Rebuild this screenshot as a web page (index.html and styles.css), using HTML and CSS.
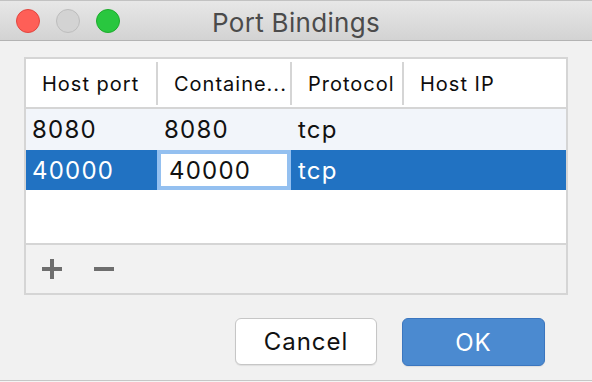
FILE: index.html
```html
<!DOCTYPE html>
<html lang="en">
  <head>
    <meta charset="UTF-8" />
    <title>Port Bindings</title>
    <link rel="stylesheet" href="styles.css">
  </head>
  <body>
    <div class="window">
      <header class="titlebar">
        <div class="lights">
          <span class="light light-close"></span>
          <span class="light light-min"></span>
          <span class="light light-max"></span>
        </div>
        <h1 class="title">Port Bindings</h1>
        <div></div>
      </header>

      <main class="content">
        <section class="table-panel">
          <div class="table-head">
            <div class="head-cell">Host port</div>
            <div class="head-cell">Containe...</div>
            <div class="head-cell">Protocol</div>
            <div class="head-cell head-last">Host IP</div>
          </div>
          <div class="table-row">
            <div class="cell">8080</div>
            <div class="cell">8080</div>
            <div class="cell">tcp</div>
            <div class="cell"></div>
          </div>
          <div class="table-row row-selected">
            <div class="cell">40000</div>
            <div class="cell cell-edit"><span class="editor">40000</span></div>
            <div class="cell">tcp</div>
            <div class="cell"></div>
          </div>
          <div class="table-empty"></div>
          <div class="table-toolbar">
            <button class="tool-btn" title="Add">
              <svg width="20" height="20" viewBox="0 0 20 20"><rect x="0" y="8" width="20" height="4" /><rect x="8" y="0" width="4" height="20" /></svg>
            </button>
            <button class="tool-btn" title="Remove">
              <svg width="20" height="20" viewBox="0 0 20 20"><rect x="0" y="8" width="20" height="4" /></svg>
            </button>
          </div>
        </section>

        <div class="actions">
          <button class="btn">Cancel</button>
          <button class="btn btn-primary">OK</button>
        </div>
      </main>
    </div>
  </body>
</html>
```

FILE: styles.css
```css
* {
  box-sizing: border-box;
}

body {
  margin: 0;
  background: #f4f4f4;
  font-family: Inter, "Liberation Sans", sans-serif;
  color: #111;
}

.window {
  width: 592px;
  height: 381px;
  display: flex;
  flex-direction: column;
  background: #f1f1f1;
  border-top: 1px solid #c2c2c2;
  border-bottom: 1px solid #c6c6c6;
}

/* title bar */
.titlebar {
  height: 40px;
  display: grid;
  grid-template-columns: 1fr auto 1fr;
  align-items: center;
  background: linear-gradient(#e7e7e7, #d3d3d3);
  border-bottom: 1px solid #b3b3b3;
}

.lights {
  display: flex;
  gap: 16px;
  padding-left: 16px;
}

.light {
  width: 24px;
  height: 24px;
  border-radius: 50%;
  border: 1px solid;
}

.light-close {
  background: #fe5f57;
  border-color: #e2463f;
}

.light-min {
  background: #d3d3d3;
  border-color: #bdbdbd;
}

.light-max {
  background: #29c73f;
  border-color: #1dac2c;
}

.title {
  margin: 0;
  padding-top: 3px;
  font-size: 26px;
  font-weight: 400;
  color: #4b4b4b;
  letter-spacing: 0.3px;
}

/* content */
.content {
  flex: 1;
  padding: 16px 24px 0 24px;
}

.table-panel {
  height: 238px;
  display: flex;
  flex-direction: column;
  background: #fff;
  border: 2px solid #d5d5d5;
}

.table-head,
.table-row {
  display: grid;
  grid-template-columns: 132px 134px 112px 1fr;
}

.table-head {
  height: 50px;
  padding: 3px 0 2px;
  border-bottom: 2px solid #d5d5d5;
}

.head-cell {
  display: flex;
  align-items: center;
  padding-left: 16px;
  font-size: 20px;
  letter-spacing: 1px;
  color: #0d0d0d;
  border-right: 2px solid #d5d5d5;
  white-space: nowrap;
}

.head-cell.head-last {
  border-right: none;
}

.table-row {
  height: 41px;
  background: #f2f5fa;
}

.table-row.row-selected {
  height: 40px;
  background: #2172c2;
  color: #fff;
}

.cell {
  display: flex;
  align-items: center;
  padding-left: 6px;
  font-size: 24px;
  letter-spacing: 1.2px;
}

.cell-edit {
  padding: 0;
}

.editor {
  width: 100%;
  height: 100%;
  display: flex;
  align-items: center;
  padding-left: 8px;
  background: #fff;
  color: #111;
  border: 4px solid #94c0f0;
  margin-left: -1px;
}

.table-empty {
  flex: 1;
}

.table-toolbar {
  height: 50px;
  display: flex;
  align-items: center;
  gap: 32px;
  padding-left: 16px;
  background: #f2f2f2;
  border-top: 2px solid #d5d5d5;
}

.tool-btn {
  padding: 0;
  border: none;
  background: none;
  display: flex;
  fill: #6e6e6e;
}

/* dialog buttons */
.actions {
  display: flex;
  justify-content: flex-end;
  gap: 25px;
  margin-top: 23px;
  padding-right: 23px;
}

.btn {
  width: 142px;
  height: 47px;
  font-family: Inter, "Liberation Sans", sans-serif;
  font-size: 24px;
  letter-spacing: 1px;
  color: #111;
  background: #fff;
  border: 1px solid #c6c6c6;
  border-radius: 6px;
  box-shadow: 0 1px 1px rgba(0, 0, 0, 0.08);
}

.btn-primary {
  width: 143px;
  height: 48px;
  color: #fff;
  background: #4b8ad0;
  border-color: #3b76bf;
}
```
